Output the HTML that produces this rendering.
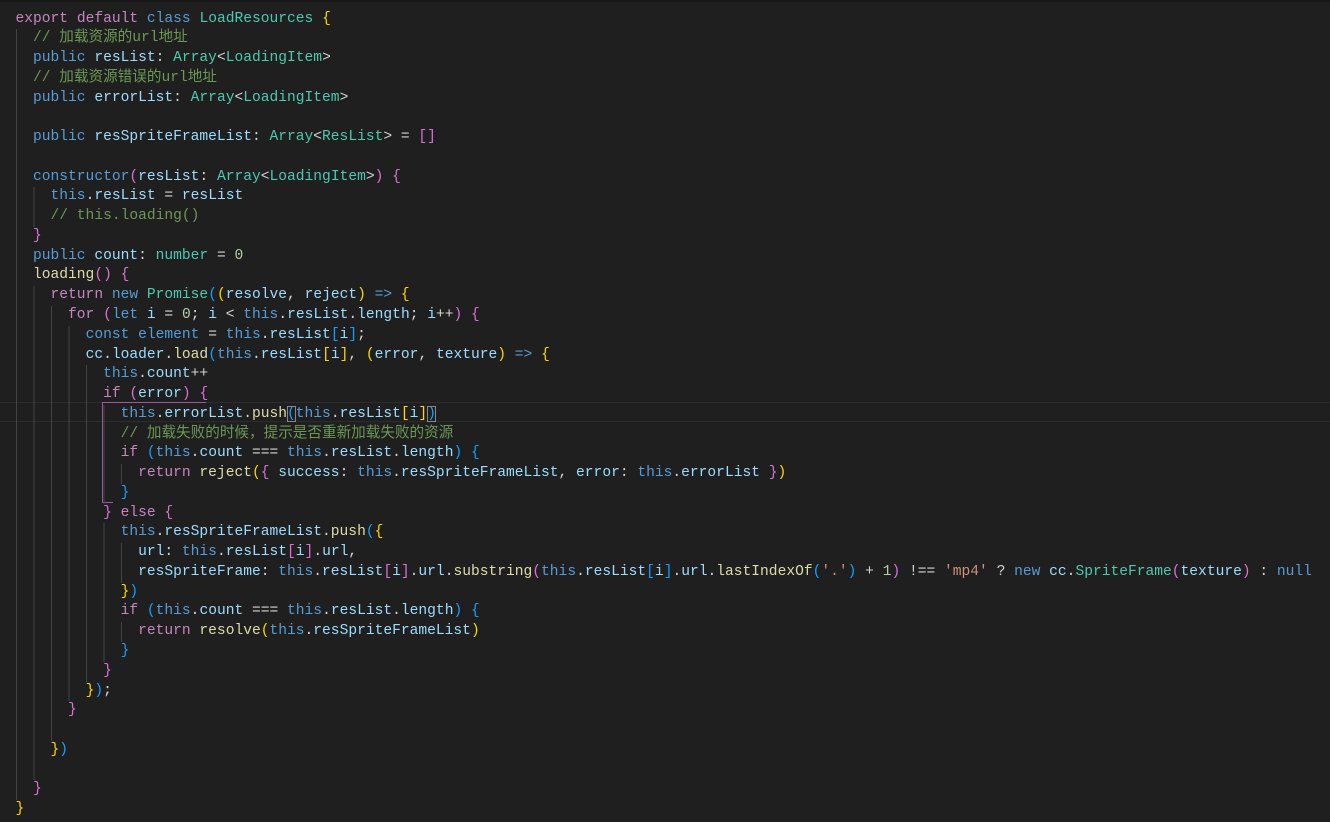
<!DOCTYPE html>
<html><head><meta charset="utf-8"><style>
html,body{margin:0;padding:0;background:#1f1f1f;width:1330px;height:822px;overflow:hidden}
.ed{position:relative;padding-top:9.5px;font-family:"Liberation Mono","Noto Sans CJK SC",monospace;font-size:14.6px;line-height:19.78px;color:#d4d4d4}
.top{position:absolute;left:0;top:0;width:1330px;height:2px;background:#181818}
.l{height:19.78px;padding-left:15.5px;position:relative;white-space:pre}
.i{display:inline-block;height:19.78px;vertical-align:top;background:repeating-linear-gradient(to right,#444 0 1px,transparent 1px 17.52px)}
.k{color:#c586c0}.b{color:#569cd6}.v{color:#9cdcfe}.t{color:#4ec9b0}.f{color:#dcdcaa}
.c{color:#6a9955}.n{color:#b5cea8}.s{color:#ce9178}
.b0{color:#ffd700}.b1{color:#da70d6}.b2{color:#179fff}
.cur{position:absolute;left:0;top:402px;width:1330px;height:18px;border-top:1px solid #2c2c2c;border-bottom:1px solid #2c2c2c}
.bg{position:absolute;border:1px solid #a056a0}
.bx{outline:1px solid #888;outline-offset:-1px}
</style></head><body>
<div class="top"></div>
<div class="cur"></div>
<div class="bg" style="left:102px;top:402px;width:104px;height:0;border-width:1px 0 0 0"></div>
<div class="bg" style="left:102px;top:402px;width:10px;height:100px;border-width:0 0 1px 1px"></div>
<div class="ed">
<div class="l"><span class="k">export</span> <span class="k">default</span> <span class="b">class</span> <span class="t">LoadResources</span> <span class="b0">{</span></div>
<div class="l"><span class="i">  </span><span class="c">// 加载资源的url地址</span></div>
<div class="l"><span class="i">  </span><span class="b">public</span> <span class="v">resList</span>: <span class="t">Array</span>&lt;<span class="t">LoadingItem</span>&gt;</div>
<div class="l"><span class="i">  </span><span class="c">// 加载资源错误的url地址</span></div>
<div class="l"><span class="i">  </span><span class="b">public</span> <span class="v">errorList</span>: <span class="t">Array</span>&lt;<span class="t">LoadingItem</span>&gt;</div>
<div class="l"><span class="i">  </span></div>
<div class="l"><span class="i">  </span><span class="b">public</span> <span class="v">resSpriteFrameList</span>: <span class="t">Array</span>&lt;<span class="t">ResList</span>&gt; = <span class="b1">[]</span></div>
<div class="l"><span class="i">  </span></div>
<div class="l"><span class="i">  </span><span class="b">constructor</span><span class="b1">(</span><span class="v">resList</span>: <span class="t">Array</span>&lt;<span class="t">LoadingItem</span>&gt;<span class="b1">)</span> <span class="b1">{</span></div>
<div class="l"><span class="i">    </span><span class="b">this</span>.<span class="v">resList</span> = <span class="v">resList</span></div>
<div class="l"><span class="i">    </span><span class="c">// this.loading()</span></div>
<div class="l"><span class="i">  </span><span class="b1">}</span></div>
<div class="l"><span class="i">  </span><span class="b">public</span> <span class="v">count</span>: <span class="t">number</span> = <span class="n">0</span></div>
<div class="l"><span class="i">  </span><span class="f">loading</span><span class="b1">()</span> <span class="b1">{</span></div>
<div class="l"><span class="i">    </span><span class="k">return</span> <span class="b">new</span> <span class="t">Promise</span><span class="b2">(</span><span class="b0">(</span><span class="v">resolve</span>, <span class="v">reject</span><span class="b0">)</span> <span class="b">=&gt;</span> <span class="b0">{</span></div>
<div class="l"><span class="i">      </span><span class="k">for</span> <span class="b1">(</span><span class="b">let</span> <span class="v">i</span> = <span class="n">0</span>; <span class="v">i</span> &lt; <span class="b">this</span>.<span class="v">resList</span>.<span class="v">length</span>; <span class="v">i</span>++<span class="b1">)</span> <span class="b1">{</span></div>
<div class="l"><span class="i">        </span><span class="b">const</span> <span class="b">element</span> = <span class="b">this</span>.<span class="v">resList</span><span class="b2">[</span><span class="v">i</span><span class="b2">]</span>;</div>
<div class="l"><span class="i">        </span><span class="v">cc</span>.<span class="v">loader</span>.<span class="f">load</span><span class="b2">(</span><span class="b">this</span>.<span class="v">resList</span><span class="b0">[</span><span class="v">i</span><span class="b0">]</span>, <span class="b0">(</span><span class="v">error</span>, <span class="v">texture</span><span class="b0">)</span> <span class="b">=&gt;</span> <span class="b0">{</span></div>
<div class="l"><span class="i">          </span><span class="b">this</span>.<span class="v">count</span>++</div>
<div class="l"><span class="i">          </span><span class="k">if</span> <span class="b1">(</span><span class="v">error</span><span class="b1">)</span> <span class="b1">{</span></div>
<div class="l"><span class="i">            </span><span class="b">this</span>.<span class="v">errorList</span>.<span class="f">push</span><span class="b2 bx">(</span><span class="b">this</span>.<span class="v">resList</span><span class="b0">[</span><span class="v">i</span><span class="b0">]</span><span class="b2 bx">)</span></div>
<div class="l"><span class="i">            </span><span class="c">// 加载失败的时候，提示是否重新加载失败的资源</span></div>
<div class="l"><span class="i">            </span><span class="k">if</span> <span class="b2">(</span><span class="b">this</span>.<span class="v">count</span> === <span class="b">this</span>.<span class="v">resList</span>.<span class="v">length</span><span class="b2">)</span> <span class="b2">{</span></div>
<div class="l"><span class="i">              </span><span class="k">return</span> <span class="f">reject</span><span class="b0">(</span><span class="b1">{</span> <span class="v">success</span>: <span class="b">this</span>.<span class="v">resSpriteFrameList</span>, <span class="v">error</span>: <span class="b">this</span>.<span class="v">errorList</span> <span class="b1">}</span><span class="b0">)</span></div>
<div class="l"><span class="i">            </span><span class="b2">}</span></div>
<div class="l"><span class="i">          </span><span class="b1">}</span> <span class="k">else</span> <span class="b1">{</span></div>
<div class="l"><span class="i">            </span><span class="b">this</span>.<span class="v">resSpriteFrameList</span>.<span class="f">push</span><span class="b2">(</span><span class="b0">{</span></div>
<div class="l"><span class="i">              </span><span class="v">url</span>: <span class="b">this</span>.<span class="v">resList</span><span class="b1">[</span><span class="v">i</span><span class="b1">]</span>.<span class="v">url</span>,</div>
<div class="l"><span class="i">              </span><span class="v">resSpriteFrame</span>: <span class="b">this</span>.<span class="v">resList</span><span class="b1">[</span><span class="v">i</span><span class="b1">]</span>.<span class="v">url</span>.<span class="f">substring</span><span class="b1">(</span><span class="b">this</span>.<span class="v">resList</span><span class="b2">[</span><span class="v">i</span><span class="b2">]</span>.<span class="v">url</span>.<span class="f">lastIndexOf</span><span class="b2">(</span><span class="s">'.'</span><span class="b2">)</span> + <span class="n">1</span><span class="b1">)</span> !== <span class="s">'mp4'</span> ? <span class="b">new</span> <span class="v">cc</span>.<span class="t">SpriteFrame</span><span class="b1">(</span><span class="v">texture</span><span class="b1">)</span> : <span class="b">null</span></div>
<div class="l"><span class="i">            </span><span class="b0">}</span><span class="b2">)</span></div>
<div class="l"><span class="i">            </span><span class="k">if</span> <span class="b2">(</span><span class="b">this</span>.<span class="v">count</span> === <span class="b">this</span>.<span class="v">resList</span>.<span class="v">length</span><span class="b2">)</span> <span class="b2">{</span></div>
<div class="l"><span class="i">              </span><span class="k">return</span> <span class="f">resolve</span><span class="b0">(</span><span class="b">this</span>.<span class="v">resSpriteFrameList</span><span class="b0">)</span></div>
<div class="l"><span class="i">            </span><span class="b2">}</span></div>
<div class="l"><span class="i">          </span><span class="b1">}</span></div>
<div class="l"><span class="i">        </span><span class="b0">}</span><span class="b2">)</span>;</div>
<div class="l"><span class="i">      </span><span class="b1">}</span></div>
<div class="l"><span class="i">      </span></div>
<div class="l"><span class="i">    </span><span class="b0">}</span><span class="b2">)</span></div>
<div class="l"><span class="i">    </span></div>
<div class="l"><span class="i">  </span><span class="b1">}</span></div>
<div class="l"><span class="b0">}</span></div>
</div>
</body></html>
